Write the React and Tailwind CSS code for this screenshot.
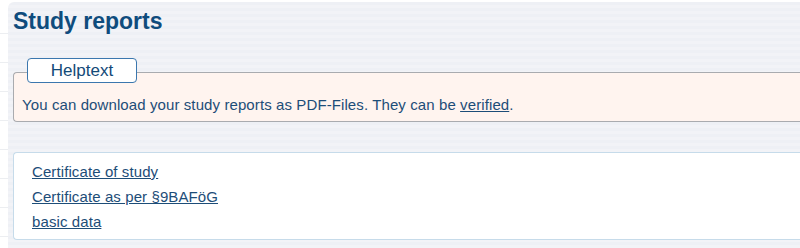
export default function App() {
  return (
    <div className="w-[800px] h-[248px] overflow-hidden bg-white flex font-['Liberation_Sans',Arial,sans-serif]">
      <div className="w-2 shrink-0 bg-[repeating-linear-gradient(180deg,transparent_0px,transparent_28px,#eceef1_28px,#eceef1_29px)] bg-[position:0_5px]" />
      <div className="flex-1 mt-[2px] rounded-tl-[6px] bg-[repeating-linear-gradient(180deg,#eef0f5_0px,#eef0f5_3px,#f2f3f7_3px,#f2f3f7_6px)] pl-[5px] pt-[6px]">
        <h1 className="text-[23px] leading-[26px] font-bold text-[#0f4c7d]">Study reports</h1>
        <div className="relative mt-[38px] h-[50px] border border-[#a9abaf] border-r-0 rounded-l-[4px] bg-[#fff4ef] pl-[8px] pt-[23px]">
          <div className="absolute -top-[15px] left-[13px] w-[110px] h-[25px] bg-white border border-[#3b77ae] rounded-[4px] flex items-center justify-center text-[17px] text-[#134a78]">
            Helptext
          </div>
          <p className="text-[15px] leading-[18px] tracking-[0.1px] text-[#1d4d78]">
            You can download your study reports as PDF-Files. They can be{" "}
            <a href="#" className="underline text-[#1d4d78]">verified</a>.
          </p>
        </div>
        <div className="mt-[30px] h-[88px] border border-[#c6dbea] border-r-0 rounded-l-[4px] bg-white pl-[18px] pt-[6px] flex flex-col">
          <a href="#" className="text-[15px] leading-[25px] tracking-[0.1px] underline text-[#1d4d78] w-fit">Certificate of study</a>
          <a href="#" className="text-[15px] leading-[25px] tracking-[0.1px] underline text-[#1d4d78] w-fit">Certificate as per §9BAFöG</a>
          <a href="#" className="text-[15px] leading-[25px] tracking-[0.1px] underline text-[#1d4d78] w-fit">basic data</a>
        </div>
      </div>
    </div>
  );
}
